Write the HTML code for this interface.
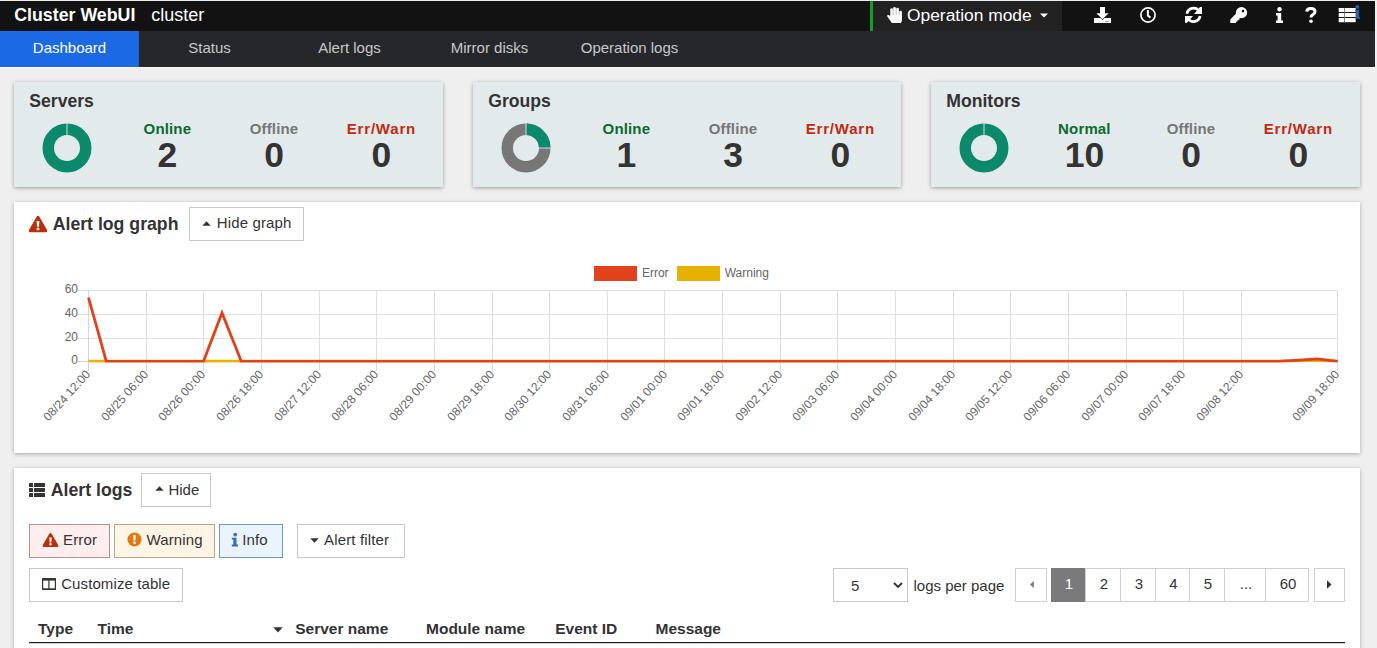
<!DOCTYPE html><html><head><meta charset="utf-8"><style>
html,body{margin:0;padding:0;}
body{width:1377px;height:648px;overflow:hidden;background:#efefef;position:relative;font-family:"Liberation Sans",sans-serif;}
.t{position:absolute;line-height:1;white-space:nowrap;}
svg{position:absolute;overflow:visible;}
</style></head><body>
<div style="position:absolute;left:0px;top:1px;width:1375px;height:30px;background:#121212"></div>
<div style="position:absolute;left:0px;top:31px;width:1375px;height:36px;background:#26272b"></div>
<div style="position:absolute;left:0px;top:31px;width:139px;height:36px;background:#1c69e6"></div>
<div style="position:absolute;left:0px;top:67px;width:1375px;height:1px;background:#fbfaf4"></div>
<div class="t" style="left:14.20px;top:6.93px;font-size:17.8px;font-weight:700;color:#fff;">Cluster WebUI</div>
<div class="t" style="left:151.30px;top:5.76px;font-size:18px;font-weight:400;color:#fff;">cluster</div>
<div style="position:absolute;left:870px;top:1px;width:192px;height:30px;background:#222"></div>
<div style="position:absolute;left:870px;top:1px;width:3px;height:30px;background:#13a01e"></div>
<div class="t" style="left:907.00px;top:6.57px;font-size:17.4px;font-weight:400;color:#fff;">Operation mode</div>
<div class="t" style="left:-430.50px;width:1000px;text-align:center;top:40.30px;font-size:15px;font-weight:400;color:#fff;">Dashboard</div>
<div class="t" style="left:-290.50px;width:1000px;text-align:center;top:40.30px;font-size:15px;font-weight:400;color:#c8c8c8;">Status</div>
<div class="t" style="left:-150.50px;width:1000px;text-align:center;top:40.30px;font-size:15px;font-weight:400;color:#c8c8c8;">Alert logs</div>
<div class="t" style="left:-10.50px;width:1000px;text-align:center;top:40.30px;font-size:15px;font-weight:400;color:#c8c8c8;">Mirror disks</div>
<div class="t" style="left:129.50px;width:1000px;text-align:center;top:40.30px;font-size:15px;font-weight:400;color:#c8c8c8;">Operation logs</div>
<svg style="left:884px;top:4px" width="22" height="22" viewBox="0 0 22 22">
<rect x="6.3" y="4.2" width="2.6" height="10" rx="1.3" fill="#fff"/>
<rect x="9.2" y="3.1" width="2.7" height="11" rx="1.3" fill="#fff"/>
<rect x="12.2" y="3.7" width="2.7" height="11" rx="1.3" fill="#fff"/>
<rect x="15.2" y="6.8" width="2.7" height="8" rx="1.3" fill="#fff"/>
<path fill="#fff" d="M6.3 11 H17.9 V16.5 L17 19 H7.9 L3.3 12.6 Q2.8 11.6 3.6 11.1 Q4.4 10.6 5.2 11.3 L6.3 12.4 Z"/>
</svg>
<svg style="left:1040px;top:13px" width="9" height="6" viewBox="0 0 9 6"><path fill="#fff" d="M0 0.5 H8 L4 4.5 Z"/></svg>
<svg style="left:1094px;top:7px" width="17" height="16" viewBox="0 0 17 16">
<path fill="#fff" d="M6 0 H11 V6.2 H14.6 L8.5 12.3 L2.4 6.2 H6 Z"/>
<path fill="#fff" d="M0 10.9 H6.6 L8.5 13 L10.4 10.9 H17 V15.9 H0 Z"/>
<rect x="11.3" y="14" width="3.6" height="0.9" fill="#999"/></svg>
<svg style="left:1140px;top:7px" width="16" height="16" viewBox="0 0 16 16">
<circle cx="8" cy="8" r="7.1" fill="none" stroke="#fff" stroke-width="1.7"/>
<path d="M7.9 3.1 V8.6 L10.4 10.6" fill="none" stroke="#fff" stroke-width="2"/></svg>
<svg style="left:1185px;top:7px" width="17" height="16" viewBox="0 0 17 16">
<path fill="none" stroke="#fff" stroke-width="2.7" d="M1.94 6.8 A6.65 6.65 0 0 1 13.95 4.09"/>
<path fill="#fff" d="M15 0 H17 V6.9 H9 Z"/>
<path fill="none" stroke="#fff" stroke-width="2.7" d="M15.06 9.0 A6.65 6.65 0 0 1 3.05 11.71"/>
<path fill="#fff" d="M2 15.8 H0 V8.9 H8 Z"/></svg>
<svg style="left:1230px;top:7px" width="18" height="16" viewBox="0 0 18 16">
<circle cx="11.5" cy="5.6" r="5.6" fill="#fff"/>
<circle cx="13" cy="4.1" r="1.3" fill="#121212"/>
<path fill="#fff" d="M0.3 12.4 L6.6 6.1 L11.2 10.2 H9.6 V12.4 H8.4 V13.6 H7.2 V14.8 H6 V15.9 H0.3 Z"/></svg>
<svg style="left:1275px;top:7px" width="9" height="16" viewBox="0 0 9 16">
<circle cx="4.5" cy="2.2" r="2.2" fill="#fff"/>
<path fill="#fff" d="M1 6 H6.2 V13.4 H8 V16 H1 V13.4 H2.6 V8.6 H1 Z"/></svg>
<svg style="left:1305px;top:7px" width="12" height="16" viewBox="0 0 12 16">
<path fill="none" stroke="#fff" stroke-width="3" d="M1.7 4.6 Q2 1.6 6 1.6 Q10 1.6 10 4.6 Q10 6.4 7.8 7.6 Q6 8.6 6 10.5"/>
<circle cx="6" cy="14.2" r="1.8" fill="#fff"/></svg>
<svg style="left:1338px;top:5px" width="24" height="18" viewBox="0 0 24 18">
<rect x="0.7" y="3" width="17" height="4" fill="#fff"/>
<rect x="0.7" y="8" width="17" height="4" fill="#fff"/>
<rect x="0.7" y="13" width="17" height="4.2" fill="#fff"/>
<rect x="6" y="3" width="0.8" height="14.2" fill="#666"/>
<circle cx="19.3" cy="1.9" r="1.9" fill="#2a64a8"/>
<path fill="#2a64a8" d="M17.2 5 H21 V12 H22 V13.8 H17.2 V12 H18 V6.4 H17.2 Z"/></svg>
<div style="position:absolute;left:14px;top:82px;width:429px;height:105px;background:#e3eaec;box-shadow:0 1px 4px rgba(0,0,0,0.35)"></div>
<div class="t" style="left:29.30px;top:92.50px;font-size:17.6px;font-weight:700;color:#333;">Servers</div>
<svg style="left:40.5px;top:121.80000000000001px" width="52" height="52" viewBox="40.5 121.80000000000001 52 52"><circle cx="66.5" cy="147.8" r="18.75" fill="none" stroke="#0b8a6b" stroke-width="11.5"/><line x1="66.5" y1="122.80000000000001" x2="66.5" y2="135.3" stroke="#e3eaec" stroke-width="0.9"/></svg>
<div class="t" style="left:-332.60px;width:1000px;text-align:center;top:121.00px;font-size:15px;font-weight:700;color:#0a6b30;letter-spacing:0.15px;">Online</div>
<div class="t" style="left:-332.60px;width:1000px;text-align:center;top:137.95px;font-size:35.5px;font-weight:700;color:#333;">2</div>
<div class="t" style="left:-226.00px;width:1000px;text-align:center;top:121.00px;font-size:15px;font-weight:700;color:#767676;letter-spacing:0.15px;">Offline</div>
<div class="t" style="left:-226.00px;width:1000px;text-align:center;top:137.95px;font-size:35.5px;font-weight:700;color:#333;">0</div>
<div class="t" style="left:-118.60px;width:1000px;text-align:center;top:121.00px;font-size:15px;font-weight:700;color:#c02a10;letter-spacing:0.8px;">Err/Warn</div>
<div class="t" style="left:-118.60px;width:1000px;text-align:center;top:137.95px;font-size:35.5px;font-weight:700;color:#333;">0</div>
<div style="position:absolute;left:473px;top:82px;width:428px;height:105px;background:#e3eaec;box-shadow:0 1px 4px rgba(0,0,0,0.35)"></div>
<div class="t" style="left:488.30px;top:92.50px;font-size:17.6px;font-weight:700;color:#333;">Groups</div>
<svg style="left:499.5px;top:121.80000000000001px" width="52" height="52" viewBox="499.5 121.80000000000001 52 52"><circle cx="525.5" cy="147.8" r="18.75" fill="none" stroke="#777777" stroke-width="11.5"/><path d="M525.5 129.05 A18.75 18.75 0 0 1 544.25 147.80" fill="none" stroke="#0b8a6b" stroke-width="11.5"/><line x1="525.5" y1="122.80000000000001" x2="525.5" y2="135.3" stroke="#e3eaec" stroke-width="0.9"/><line x1="538.0" y1="147.8" x2="550.5" y2="147.8" stroke="#e3eaec" stroke-width="0.9"/></svg>
<div class="t" style="left:126.40px;width:1000px;text-align:center;top:121.00px;font-size:15px;font-weight:700;color:#0a6b30;letter-spacing:0.15px;">Online</div>
<div class="t" style="left:126.40px;width:1000px;text-align:center;top:137.95px;font-size:35.5px;font-weight:700;color:#333;">1</div>
<div class="t" style="left:233.00px;width:1000px;text-align:center;top:121.00px;font-size:15px;font-weight:700;color:#767676;letter-spacing:0.15px;">Offline</div>
<div class="t" style="left:233.00px;width:1000px;text-align:center;top:137.95px;font-size:35.5px;font-weight:700;color:#333;">3</div>
<div class="t" style="left:340.40px;width:1000px;text-align:center;top:121.00px;font-size:15px;font-weight:700;color:#c02a10;letter-spacing:0.8px;">Err/Warn</div>
<div class="t" style="left:340.40px;width:1000px;text-align:center;top:137.95px;font-size:35.5px;font-weight:700;color:#333;">0</div>
<div style="position:absolute;left:931px;top:82px;width:429px;height:105px;background:#e3eaec;box-shadow:0 1px 4px rgba(0,0,0,0.35)"></div>
<div class="t" style="left:946.30px;top:92.50px;font-size:17.6px;font-weight:700;color:#333;">Monitors</div>
<svg style="left:957.5px;top:121.80000000000001px" width="52" height="52" viewBox="957.5 121.80000000000001 52 52"><circle cx="983.5" cy="147.8" r="18.75" fill="none" stroke="#0b8a6b" stroke-width="11.5"/><line x1="983.5" y1="122.80000000000001" x2="983.5" y2="135.3" stroke="#e3eaec" stroke-width="0.9"/></svg>
<div class="t" style="left:584.40px;width:1000px;text-align:center;top:121.00px;font-size:15px;font-weight:700;color:#0a6b30;letter-spacing:0.15px;">Normal</div>
<div class="t" style="left:584.40px;width:1000px;text-align:center;top:137.95px;font-size:35.5px;font-weight:700;color:#333;">10</div>
<div class="t" style="left:691.00px;width:1000px;text-align:center;top:121.00px;font-size:15px;font-weight:700;color:#767676;letter-spacing:0.15px;">Offline</div>
<div class="t" style="left:691.00px;width:1000px;text-align:center;top:137.95px;font-size:35.5px;font-weight:700;color:#333;">0</div>
<div class="t" style="left:798.40px;width:1000px;text-align:center;top:121.00px;font-size:15px;font-weight:700;color:#c02a10;letter-spacing:0.8px;">Err/Warn</div>
<div class="t" style="left:798.40px;width:1000px;text-align:center;top:137.95px;font-size:35.5px;font-weight:700;color:#333;">0</div>
<div style="position:absolute;left:14px;top:202px;width:1346px;height:251px;background:#fff;box-shadow:0 1px 4px rgba(0,0,0,0.3)"></div>
<svg style="left:28px;top:215px" width="20" height="18" viewBox="0 0 20 18">
<path fill="#b7310c" d="M10 0.8 Q10.9 0.8 11.4 1.7 L19.2 15.3 Q19.8 16.9 18.1 17.2 H1.9 Q0.2 16.9 0.8 15.3 L8.6 1.7 Q9.1 0.8 10 0.8 Z"/>
<path fill="#fff" d="M8.6 6 H11.4 L11 11.8 H9 Z"/>
<rect x="8.7" y="12.8" width="2.6" height="2.4" fill="#fff"/></svg>
<div class="t" style="left:52.70px;top:215.52px;font-size:17.7px;font-weight:700;color:#333;">Alert log graph</div>
<div style="position:absolute;left:189px;top:207px;width:113px;height:32px;background:#fff;border:1px solid #c8c8c8"></div>
<svg style="left:202px;top:221px" width="9" height="5" viewBox="0 0 9 5"><path fill="#333" d="M0.3 4.8 L4.5 0.3 L8.7 4.8 Z"/></svg>
<div class="t" style="left:216.70px;top:214.50px;font-size:15px;font-weight:400;color:#333;letter-spacing:0.15px;">Hide graph</div>
<div style="position:absolute;left:594px;top:266px;width:43px;height:15px;background:#e3411c"></div>
<div class="t" style="left:641.90px;top:267.04px;font-size:12px;font-weight:400;color:#666;">Error</div>
<div style="position:absolute;left:677px;top:266px;width:43px;height:15px;background:#e6b100"></div>
<div class="t" style="left:724.70px;top:267.04px;font-size:12px;font-weight:400;color:#666;">Warning</div>
<svg style="left:0;top:0" width="1377" height="648" viewBox="0 0 1377 648"><defs><clipPath id="ca"><rect x="0" y="280" width="1377" height="82.4"/></clipPath></defs><line x1="78" y1="290.5" x2="1338" y2="290.5" stroke="#e2e2e2" stroke-width="1"/><line x1="78" y1="314.5" x2="1338" y2="314.5" stroke="#e2e2e2" stroke-width="1"/><line x1="78" y1="338.5" x2="1338" y2="338.5" stroke="#e2e2e2" stroke-width="1"/><line x1="78" y1="361.5" x2="1338" y2="361.5" stroke="#e2e2e2" stroke-width="1"/><line x1="88.5" y1="290.5" x2="88.5" y2="371" stroke="#dedede" stroke-width="1"/><line x1="146.5" y1="290.5" x2="146.5" y2="371" stroke="#dedede" stroke-width="1"/><line x1="203.5" y1="290.5" x2="203.5" y2="371" stroke="#dedede" stroke-width="1"/><line x1="261.5" y1="290.5" x2="261.5" y2="371" stroke="#dedede" stroke-width="1"/><line x1="319.5" y1="290.5" x2="319.5" y2="371" stroke="#dedede" stroke-width="1"/><line x1="376.5" y1="290.5" x2="376.5" y2="371" stroke="#dedede" stroke-width="1"/><line x1="434.5" y1="290.5" x2="434.5" y2="371" stroke="#dedede" stroke-width="1"/><line x1="492.5" y1="290.5" x2="492.5" y2="371" stroke="#dedede" stroke-width="1"/><line x1="549.5" y1="290.5" x2="549.5" y2="371" stroke="#dedede" stroke-width="1"/><line x1="607.5" y1="290.5" x2="607.5" y2="371" stroke="#dedede" stroke-width="1"/><line x1="664.5" y1="290.5" x2="664.5" y2="371" stroke="#dedede" stroke-width="1"/><line x1="722.5" y1="290.5" x2="722.5" y2="371" stroke="#dedede" stroke-width="1"/><line x1="780.5" y1="290.5" x2="780.5" y2="371" stroke="#dedede" stroke-width="1"/><line x1="837.5" y1="290.5" x2="837.5" y2="371" stroke="#dedede" stroke-width="1"/><line x1="895.5" y1="290.5" x2="895.5" y2="371" stroke="#dedede" stroke-width="1"/><line x1="953.5" y1="290.5" x2="953.5" y2="371" stroke="#dedede" stroke-width="1"/><line x1="1010.5" y1="290.5" x2="1010.5" y2="371" stroke="#dedede" stroke-width="1"/><line x1="1068.5" y1="290.5" x2="1068.5" y2="371" stroke="#dedede" stroke-width="1"/><line x1="1126.5" y1="290.5" x2="1126.5" y2="371" stroke="#dedede" stroke-width="1"/><line x1="1183.5" y1="290.5" x2="1183.5" y2="371" stroke="#dedede" stroke-width="1"/><line x1="1241.5" y1="290.5" x2="1241.5" y2="371" stroke="#dedede" stroke-width="1"/><line x1="1337.5" y1="290.5" x2="1337.5" y2="371" stroke="#dedede" stroke-width="1"/><line x1="88.5" y1="290.5" x2="88.5" y2="371" stroke="#d4d4d4" stroke-width="1"/><line x1="78" y1="361.5" x2="1338" y2="361.5" stroke="#d4d4d4" stroke-width="1"/><polyline clip-path="url(#ca)" fill="none" stroke="#e6b100" stroke-width="3" points="88.5,361.3 1279,361.3 1317.7,360.2 1337.6,361.3"/><polyline clip-path="url(#ca)" fill="none" stroke="#e3411c" stroke-width="2.8" stroke-linejoin="miter" points="88.5,297.6 106.3,361.3 203.5,361.3 222.0,312.9 241.3,361.3 1279.0,361.3 1317.7,358.9 1337.6,361.3"/></svg>
<div class="t" style="left:-922.00px;width:1000px;text-align:right;top:283.04px;font-size:12px;font-weight:400;color:#666;">60</div>
<div class="t" style="left:-922.00px;width:1000px;text-align:right;top:307.04px;font-size:12px;font-weight:400;color:#666;">40</div>
<div class="t" style="left:-922.00px;width:1000px;text-align:right;top:331.04px;font-size:12px;font-weight:400;color:#666;">20</div>
<div class="t" style="left:-922.00px;width:1000px;text-align:right;top:354.04px;font-size:12px;font-weight:400;color:#666;">0</div>
<div class="t" style="left:-912.0px;width:1000px;text-align:right;top:366.0px;font-size:12px;color:#666;transform-origin:100% 50%;transform:rotate(-48deg)">08/24 12:00</div>
<div class="t" style="left:-854.4px;width:1000px;text-align:right;top:366.0px;font-size:12px;color:#666;transform-origin:100% 50%;transform:rotate(-48deg)">08/25 06:00</div>
<div class="t" style="left:-796.7px;width:1000px;text-align:right;top:366.0px;font-size:12px;color:#666;transform-origin:100% 50%;transform:rotate(-48deg)">08/26 00:00</div>
<div class="t" style="left:-739.0px;width:1000px;text-align:right;top:366.0px;font-size:12px;color:#666;transform-origin:100% 50%;transform:rotate(-48deg)">08/26 18:00</div>
<div class="t" style="left:-681.4px;width:1000px;text-align:right;top:366.0px;font-size:12px;color:#666;transform-origin:100% 50%;transform:rotate(-48deg)">08/27 12:00</div>
<div class="t" style="left:-623.8px;width:1000px;text-align:right;top:366.0px;font-size:12px;color:#666;transform-origin:100% 50%;transform:rotate(-48deg)">08/28 06:00</div>
<div class="t" style="left:-566.1px;width:1000px;text-align:right;top:366.0px;font-size:12px;color:#666;transform-origin:100% 50%;transform:rotate(-48deg)">08/29 00:00</div>
<div class="t" style="left:-508.4px;width:1000px;text-align:right;top:366.0px;font-size:12px;color:#666;transform-origin:100% 50%;transform:rotate(-48deg)">08/29 18:00</div>
<div class="t" style="left:-450.8px;width:1000px;text-align:right;top:366.0px;font-size:12px;color:#666;transform-origin:100% 50%;transform:rotate(-48deg)">08/30 12:00</div>
<div class="t" style="left:-393.1px;width:1000px;text-align:right;top:366.0px;font-size:12px;color:#666;transform-origin:100% 50%;transform:rotate(-48deg)">08/31 06:00</div>
<div class="t" style="left:-335.5px;width:1000px;text-align:right;top:366.0px;font-size:12px;color:#666;transform-origin:100% 50%;transform:rotate(-48deg)">09/01 00:00</div>
<div class="t" style="left:-277.9px;width:1000px;text-align:right;top:366.0px;font-size:12px;color:#666;transform-origin:100% 50%;transform:rotate(-48deg)">09/01 18:00</div>
<div class="t" style="left:-220.2px;width:1000px;text-align:right;top:366.0px;font-size:12px;color:#666;transform-origin:100% 50%;transform:rotate(-48deg)">09/02 12:00</div>
<div class="t" style="left:-162.6px;width:1000px;text-align:right;top:366.0px;font-size:12px;color:#666;transform-origin:100% 50%;transform:rotate(-48deg)">09/03 06:00</div>
<div class="t" style="left:-104.9px;width:1000px;text-align:right;top:366.0px;font-size:12px;color:#666;transform-origin:100% 50%;transform:rotate(-48deg)">09/04 00:00</div>
<div class="t" style="left:-47.2px;width:1000px;text-align:right;top:366.0px;font-size:12px;color:#666;transform-origin:100% 50%;transform:rotate(-48deg)">09/04 18:00</div>
<div class="t" style="left:10.4px;width:1000px;text-align:right;top:366.0px;font-size:12px;color:#666;transform-origin:100% 50%;transform:rotate(-48deg)">09/05 12:00</div>
<div class="t" style="left:68.0px;width:1000px;text-align:right;top:366.0px;font-size:12px;color:#666;transform-origin:100% 50%;transform:rotate(-48deg)">09/06 06:00</div>
<div class="t" style="left:125.7px;width:1000px;text-align:right;top:366.0px;font-size:12px;color:#666;transform-origin:100% 50%;transform:rotate(-48deg)">09/07 00:00</div>
<div class="t" style="left:183.3px;width:1000px;text-align:right;top:366.0px;font-size:12px;color:#666;transform-origin:100% 50%;transform:rotate(-48deg)">09/07 18:00</div>
<div class="t" style="left:241.0px;width:1000px;text-align:right;top:366.0px;font-size:12px;color:#666;transform-origin:100% 50%;transform:rotate(-48deg)">09/08 12:00</div>
<div class="t" style="left:337.1px;width:1000px;text-align:right;top:366.0px;font-size:12px;color:#666;transform-origin:100% 50%;transform:rotate(-48deg)">09/09 18:00</div>
<div style="position:absolute;left:14px;top:468px;width:1346px;height:200px;background:#fff;box-shadow:0 1px 4px rgba(0,0,0,0.3)"></div>
<svg style="left:29px;top:483px" width="16" height="14" viewBox="0 0 16 14">
<rect x="0" y="0" width="4" height="4" rx="0.6" fill="#333"/><rect x="5" y="0" width="11" height="4" rx="0.6" fill="#333"/>
<rect x="0" y="5" width="4" height="4" rx="0.6" fill="#333"/><rect x="5" y="5" width="11" height="4" rx="0.6" fill="#333"/>
<rect x="0" y="10" width="4" height="4" rx="0.6" fill="#333"/><rect x="5" y="10" width="11" height="4" rx="0.6" fill="#333"/></svg>
<div class="t" style="left:50.80px;top:482.02px;font-size:17.7px;font-weight:700;color:#333;">Alert logs</div>
<div style="position:absolute;left:141px;top:473px;width:68px;height:32px;background:#fff;border:1px solid #c8c8c8"></div>
<svg style="left:155px;top:486px" width="9" height="5" viewBox="0 0 9 5"><path fill="#333" d="M0.3 4.8 L4.5 0.3 L8.7 4.8 Z"/></svg>
<div class="t" style="left:168.40px;top:482.10px;font-size:15px;font-weight:400;color:#333;">Hide</div>
<div style="position:absolute;left:29px;top:524px;width:79px;height:32px;background:#feeeee;border:1px solid #c48a8a"></div>
<svg style="left:41.5px;top:532px" width="17" height="16" viewBox="0 0 20 18">
<path fill="#b7310c" d="M10 0.8 Q10.9 0.8 11.4 1.7 L19.2 15.3 Q19.8 16.9 18.1 17.2 H1.9 Q0.2 16.9 0.8 15.3 L8.6 1.7 Q9.1 0.8 10 0.8 Z"/>
<path fill="#fff" d="M8.6 6 H11.4 L11 11.8 H9 Z"/>
<rect x="8.7" y="12.8" width="2.6" height="2.4" fill="#fff"/></svg>
<div class="t" style="left:63.00px;top:531.90px;font-size:15px;font-weight:400;color:#333;letter-spacing:0.15px;">Error</div>
<div style="position:absolute;left:114px;top:524px;width:99px;height:32px;background:#fff5e6;border:1px solid #c4a27c"></div>
<svg style="left:126.5px;top:532px" width="15" height="15" viewBox="0 0 15 15">
<circle cx="7.5" cy="7.5" r="7" fill="#e27a12"/>
<path fill="#fff" d="M6.3 3 H8.7 L8.4 8.6 H6.6 Z"/><rect x="6.4" y="9.6" width="2.2" height="2.2" fill="#fff"/></svg>
<div class="t" style="left:146.40px;top:531.90px;font-size:15px;font-weight:400;color:#333;letter-spacing:0.15px;">Warning</div>
<div style="position:absolute;left:219px;top:524px;width:62px;height:32px;background:#eaf3fe;border:1px solid #6f9acf"></div>
<svg style="left:231px;top:531px" width="8" height="16" viewBox="0 0 8 16">
<circle cx="4.2" cy="3.6" r="1.9" fill="#3a6fb0"/>
<path fill="#3a6fb0" d="M0.8 6.8 H5.5 V13.6 H7 V15.4 H0.8 V13.6 H2.3 V8.4 H0.8 Z"/></svg>
<div class="t" style="left:242.20px;top:531.90px;font-size:15px;font-weight:400;color:#333;letter-spacing:0.15px;">Info</div>
<div style="position:absolute;left:297px;top:524px;width:106px;height:32px;background:#fff;border:1px solid #c8c8c8"></div>
<svg style="left:310px;top:538px" width="9" height="5" viewBox="0 0 9 5"><path fill="#333" d="M0.3 0.2 L4.5 4.7 L8.7 0.2 Z"/></svg>
<div class="t" style="left:324.10px;top:531.90px;font-size:15px;font-weight:400;color:#333;letter-spacing:0.15px;">Alert filter</div>
<div style="position:absolute;left:29px;top:568px;width:152px;height:32px;background:#fff;border:1px solid #c8c8c8"></div>
<svg style="left:42px;top:578px" width="14" height="12" viewBox="0 0 14 12">
<rect x="0.6" y="0.6" width="12.8" height="10.8" rx="0.8" fill="none" stroke="#333" stroke-width="1.2"/>
<rect x="0.2" y="0" width="13.6" height="2.6" fill="#333"/>
<rect x="0.2" y="10.4" width="13.6" height="1.6" fill="#333"/>
<rect x="6.3" y="1" width="1.2" height="10" fill="#333"/></svg>
<div class="t" style="left:61.20px;top:576.30px;font-size:15px;font-weight:400;color:#333;letter-spacing:0.1px;">Customize table</div>
<div style="position:absolute;left:833px;top:568px;width:73px;height:32px;background:#fff;border:1px solid #c8c8c8"></div>
<div class="t" style="left:851.00px;top:577.80px;font-size:15px;font-weight:400;color:#333;">5</div>
<svg style="left:893px;top:581.7px" width="10" height="7" viewBox="0 0 10 7"><path fill="none" stroke="#333" stroke-width="1.8" d="M1 1 L5 5 L9 1"/></svg>
<div class="t" style="left:913.50px;top:577.80px;font-size:15px;font-weight:400;color:#333;">logs per page</div>
<div style="position:absolute;left:1015px;top:568px;width:30px;height:32px;background:#fff;border:1px solid #d0d0d0"></div>
<svg style="left:1029px;top:580px" width="6" height="9" viewBox="0 0 6 9"><path fill="#777" d="M4.8 1 L1 4.5 L4.8 8 Z"/></svg>
<div style="position:absolute;left:1051px;top:568px;width:36px;height:34px;background:#7a7a7c"></div>
<div class="t" style="left:569.00px;width:1000px;text-align:center;top:576.30px;font-size:15px;font-weight:400;color:#fff;">1</div>
<div style="position:absolute;left:1085px;top:568px;width:34px;height:32px;background:#fff;border:1px solid #d0d0d0"></div>
<div class="t" style="left:604.00px;width:1000px;text-align:center;top:576.30px;font-size:15px;font-weight:400;color:#333;">2</div>
<div style="position:absolute;left:1120px;top:568px;width:34px;height:32px;background:#fff;border:1px solid #d0d0d0"></div>
<div class="t" style="left:639.00px;width:1000px;text-align:center;top:576.30px;font-size:15px;font-weight:400;color:#333;">3</div>
<div style="position:absolute;left:1155px;top:568px;width:33px;height:32px;background:#fff;border:1px solid #d0d0d0"></div>
<div class="t" style="left:673.50px;width:1000px;text-align:center;top:576.30px;font-size:15px;font-weight:400;color:#333;">4</div>
<div style="position:absolute;left:1189px;top:568px;width:34px;height:32px;background:#fff;border:1px solid #d0d0d0"></div>
<div class="t" style="left:708.00px;width:1000px;text-align:center;top:576.30px;font-size:15px;font-weight:400;color:#333;">5</div>
<div style="position:absolute;left:1224px;top:568px;width:40px;height:32px;background:#fff;border:1px solid #d0d0d0"></div>
<div class="t" style="left:746.00px;width:1000px;text-align:center;top:576.30px;font-size:15px;font-weight:400;color:#333;">...</div>
<div style="position:absolute;left:1265px;top:568px;width:42px;height:32px;background:#fff;border:1px solid #d0d0d0"></div>
<div class="t" style="left:788.00px;width:1000px;text-align:center;top:576.30px;font-size:15px;font-weight:400;color:#333;">60</div>
<div style="position:absolute;left:1314px;top:568px;width:29px;height:32px;background:#fff;border:1px solid #d0d0d0"></div>
<svg style="left:1326px;top:580px" width="6" height="9" viewBox="0 0 6 9"><path fill="#333" d="M1 0.3 L5.5 4.5 L1 8.7 Z"/></svg>
<div class="t" style="left:38.00px;top:620.68px;font-size:15.5px;font-weight:700;color:#333;">Type</div>
<div class="t" style="left:97.60px;top:620.68px;font-size:15.5px;font-weight:700;color:#333;">Time</div>
<div class="t" style="left:295.20px;top:620.68px;font-size:15.5px;font-weight:700;color:#333;">Server name</div>
<div class="t" style="left:426.00px;top:620.68px;font-size:15.5px;font-weight:700;color:#333;">Module name</div>
<div class="t" style="left:555.20px;top:620.68px;font-size:15.5px;font-weight:700;color:#333;">Event ID</div>
<div class="t" style="left:655.50px;top:620.68px;font-size:15.5px;font-weight:700;color:#333;">Message</div>
<svg style="left:273px;top:627px" width="10" height="6" viewBox="0 0 10 6"><path fill="#333" d="M0.3 0.3 H9.7 L5 5.5 Z"/></svg>
<div style="position:absolute;left:29px;top:642px;width:1316px;height:1px;background:#1e1e1e"></div>
<div style="position:absolute;left:29px;top:643px;width:1316px;height:1px;background:rgba(0,0,0,0.2)"></div>
</body></html>
